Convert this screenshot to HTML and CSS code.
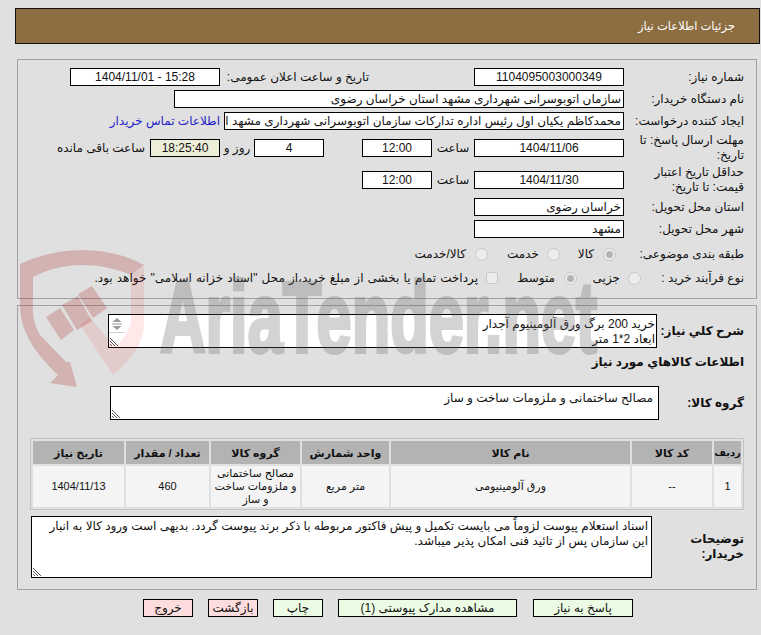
FILE: index.html
```html
<!DOCTYPE html>
<html lang="fa" dir="rtl">
<head>
<meta charset="utf-8">
<title>جزئیات اطلاعات نیاز</title>
<link rel="stylesheet" href="styles.css">
</head>
<body>
<div class="page">
  <header class="title"><span>جزئیات اطلاعات نیاز</span></header>

  <section class="panel top">
    <div class="row r1">
      <label class="lab">شماره نیاز:</label>
      <div class="box w150 c">1104095003000349</div>
      <label class="lab2">تاریخ و ساعت اعلان عمومی:</label>
      <div class="box w150 c">15:28 - 1404/11/01</div>
    </div>
    <div class="row r1">
      <label class="lab">نام دستگاه خریدار:</label>
      <div class="box w450">سازمان اتوبوسرانی شهرداری مشهد استان خراسان رضوی</div>
    </div>
    <div class="row r1">
      <label class="lab">ایجاد کننده درخواست:</label>
      <div class="box w400 clip">محمدکاظم یکیان اول رئیس اداره تدارکات سازمان اتوبوسرانی شهرداری مشهد استان خراسان</div>
      <a class="link">اطلاعات تماس خریدار</a>
    </div>
    <div class="row r2">
      <label class="lab">مهلت ارسال پاسخ: تا تاریخ:</label>
      <div class="box w150 c">1404/11/06</div>
      <span class="unit">ساعت</span>
      <div class="box w70 c">12:00</div>
      <div class="box w70 c days">4</div>
      <span class="roz">روز و</span>
      <div class="box w70 c timer">18:25:40</div>
      <span class="rem">ساعت باقی مانده</span>
    </div>
    <div class="row r2">
      <label class="lab">حداقل تاریخ اعتبار قیمت: تا تاریخ:</label>
      <div class="box w150 c">1404/11/30</div>
      <span class="unit">ساعت</span>
      <div class="box w70 c">12:00</div>
    </div>
    <div class="row r1">
      <label class="lab">استان محل تحویل:</label>
      <div class="box w150">خراسان رضوی</div>
    </div>
    <div class="row r1">
      <label class="lab">شهر محل تحویل:</label>
      <div class="box w150">مشهد</div>
    </div>
    <div class="row r4">
      <label class="lab">طبقه بندی موضوعی:</label>
      <div class="opts cat">
        <span class="radio on"></span><span class="opt o1">کالا</span>
        <span class="radio"></span><span class="opt o2">خدمت</span>
        <span class="radio"></span><span class="opt o0">کالا/خدمت</span>
      </div>
    </div>
    <div class="row r5">
      <label class="lab narrow">نوع فرآیند خرید :</label>
      <div class="opts">
        <span class="radio"></span><span class="opt o3">جزیی</span>
        <span class="radio on"></span><span class="opt o4">متوسط</span>
        <span class="check"></span><span class="opt o5">پرداخت تمام یا بخشی از مبلغ خرید،از محل "اسناد خزانه اسلامی" خواهد بود.</span>
      </div>
    </div>
  </section>

  <section class="panel bottom">
    <div class="row s1">
      <label class="lab b">شرح کلي نياز:</label>
      <div class="area need">
        <div class="need-text">خرید 200 برگ ورق آلومینیوم آجدار<br>ابعاد 2*1 متر</div>
        <div class="spin">
          <svg class="spin-ic" width="12" height="16" viewBox="0 0 12 16"><path d="M6 1 10.500 5H1.500ZM1 6.500H11V7.500H1ZM1.500 9H10.500L6 13Z" fill="#9a9a9a"/></svg>
          <svg class="grip" width="9" height="9" viewBox="0 0 9 9"><path d="M0 1 8 9M0 4 5 9M0 7 2 9" stroke="#555" fill="none"/></svg>
        </div>
      </div>
    </div>
    <h3 class="goods">اطلاعات کالاهاي مورد نياز</h3>
    <div class="row s2">
      <label class="lab b">گروه کالا:</label>
      <div class="area grp">
        <div>مصالح ساختمانی و ملزومات ساخت و ساز</div>
        <svg class="grip" width="9" height="9" viewBox="0 0 9 9"><path d="M0 1 8 9M0 4 5 9M0 7 2 9" stroke="#555" fill="none"/></svg>
      </div>
    </div>
    <table class="items">
      <thead>
        <tr><th class="t1">ردیف</th><th class="t2">کد کالا</th><th class="t3">نام کالا</th><th class="t4">واحد شمارش</th><th class="t5">گروه کالا</th><th class="t6">تعداد / مقدار</th><th class="t7">تاریخ نیاز</th></tr>
      </thead>
      <tbody>
        <tr><td>1</td><td>--</td><td>ورق آلومینیومی</td><td>متر مربع</td><td>مصالح ساختمانی و ملزومات ساخت و ساز</td><td>460</td><td>1404/11/13</td></tr>
      </tbody>
    </table>
    <div class="row s3">
      <label class="lab b">توضیحات خریدار:</label>
      <div class="area notes">
        <div>اسناد استعلام پیوست لزوماً می بایست تکمیل و پیش فاکتور مربوطه با ذکر برند پیوست گردد. بدیهی است ورود کالا به انبار این سازمان پس از تائید فنی امکان پذیر میباشد.</div>
        <svg class="grip" width="9" height="9" viewBox="0 0 9 9"><path d="M0 1 8 9M0 4 5 9M0 7 2 9" stroke="#555" fill="none"/></svg>
      </div>
    </div>
  </section>

  <nav class="actions">
    <button class="btn green bw1">پاسخ به نیاز</button>
    <button class="btn green bw2">مشاهده مدارک پیوستی (1)</button>
    <button class="btn green bw3">چاپ</button>
    <button class="btn red bw3">بازگشت</button>
    <button class="btn red bw3">خروج</button>
  </nav>
</div>

<div class="mark" aria-hidden="true">
  <svg width="761" height="635" viewBox="0 0 761 635">
    <path class="m-dark" d="M20 264C40 255 60 250 82 250C105 250 125 255 144 265L131 275C115 268 98 265 82 265C65 265 48 269 33 277V310C33 320 36 328 40 335L66 362 70 362 77 387 50 383 58 375C40 358 20 335 20 305Z"/>
    <path class="m-light" d="M144 265V325C144 345 128 362 113 375L80 325 90 318 115 347C125 337 131 328 131 320V275Z"/>
    <path class="m-dark" d="M46 317 60 308 74 330 61 340ZM62 305 78 296 92 321 77 330ZM78 294 92 286 107 308 93 318Z"/>
    <text class="m-text" x="160" y="352" textLength="437" lengthAdjust="spacingAndGlyphs">AriaTender.net</text>
  </svg>
</div>
</body>
</html>
```
FILE: styles.css
```css
* { box-sizing: border-box; }
html, body { margin: 0; height: 100%; }
body {
  background: #e0e0e0;
  color: #111;
  font: 12px/16px "Liberation Sans", "DejaVu Sans", sans-serif;
  overflow: hidden;
  position: relative;
}
.page { width: 761px; padding-top: 8px; }
.title {
  height: 36px; width: 745px;
  margin-right: 1px;
  background: #8d6e42;
  border: 1px solid #111;
  color: #fff;
  font-size: 11.5px;
  display: flex; align-items: center;
  padding-right: 24px;
}
.panel { border: 1px solid #a0a0a0; width: 740px; margin-right: 4px; }
.top { height: 240px; margin-top: 15px; padding-top: 6px; }
.bottom { height: 285px; margin-top: 6px; padding-top: 8px; }
.row { display: flex; align-items: center; }
.lab { width: 132px; padding-right: 12px; flex: none; line-height: 15px; }
.narrow { width: 115px; }
.r1 { height: 22px; }
.r2 { height: 32px; }
.r4 { height: 26px; margin-top: 1px; }
.r5 { height: 22px; }
.box {
  height: 18px; border: 1px solid #000; background: #fff;
  line-height: 16px; padding: 0 2px; white-space: nowrap; overflow: hidden; flex: none;
}
.c { text-align: center; }
.w150 { width: 150px; }
.w450 { width: 450px; }
.w400 { width: 400px; }
.w70 { width: 70px; }
.lab2 { width: 254px; padding-right: 105px; flex: none; white-space: nowrap; }
.link { color: #2222cc; margin-right: 4px; white-space: nowrap; }
.unit { width: 42px; text-align: center; flex: none; }
.days { margin-right: 38px; }
.roz { width: 34px; text-align: center; flex: none; }
.timer { background: #eeeed8; }
.rem { margin-right: 5px; white-space: nowrap; }
.opts { display: flex; align-items: center; white-space: nowrap; }
.cat { padding-right: 8px; }
.radio {
  width: 13px; height: 13px; border-radius: 50%; flex: none;
  background: #ececec; border: 1px solid #c8c8c8;
}
.radio.on::after {
  content: ""; display: block; width: 7px; height: 7px; border-radius: 50%;
  background: #b4b4b4; margin: 2px;
}
.check {
  width: 12px; height: 12px; flex: none; background: #ececec;
  border: 1px solid #c8c8c8; border-radius: 2px;
}
.opt { flex: none; }
.o1 { width: 43px; padding-right: 9px; }
.o2 { width: 59px; padding-right: 8px; }
.o0 { padding-right: 9px; }
.o3 { width: 51px; padding-right: 8px; }
.o4 { width: 66px; padding-right: 9px; }
.o5 { padding-right: 8px; word-spacing: .8px; }
.b { font-weight: bold; }
.s1 { height: 34px; }
.s1 .lab { width: 99px; }
.area { border: 1px solid #000; background: #fff; flex: none; position: relative; }
.need { width: 549px; height: 34px; display: flex; justify-content: space-between; }
.need-text { padding: 2px 1px 0 0; line-height: 15px; }
.spin { width: 16px; height: 18px; position: static; border-bottom: 1px solid #d0d0d0; }
.spin-ic { position: absolute; left: 2px; top: 2px; }
.grip { position: absolute; left: 1px; bottom: 1px; }
.goods { margin: 5px 12px 0 0; font-size: 12px; line-height: 18px; height: 33px; }
.s2 { height: 34px; }
.s2 .lab { width: 97px; }
.grp { width: 549px; height: 34px; padding: 3px 5px; }
.items {
  width: 713px; margin: 18px 12px 0 0;
  border-collapse: separate; border-spacing: 2px;
  border: 1px solid #c4c4c4; table-layout: fixed; font-size: 11px;
}
.items th { background: #b3b3b3; height: 23px; padding: 0; line-height: 14px; }
.items .t1 { font-size: 10px; }
.items td { background: #f4f4f4; height: 41px; padding: 0 2px; text-align: center; line-height: 13px; }
.t1 { width: 27px; } .t2 { width: 80px; } .t3 { width: 239px; }
.t4 { width: 87px; } .t5 { width: 89px; } .t6 { width: 83px; } .t7 { width: 91px; }
.s3 { height: 62px; margin-top: 6px; }
.s3 .lab { width: 104px; padding-left: 30px; }
.notes { width: 621px; height: 62px; padding: 2px 3px 0 12px; line-height: 15px; }
.actions { display: flex; gap: 15px; margin: 9px 128px 0 0; }
.btn {
  height: 18px; padding: 0; border: 1px solid #000; font: inherit; color: #111; line-height: 14px; flex: none;
}
.green { background: #ecfce4; }
.red { background: #fcdcdc; }
.bw1 { width: 100px; margin-left: 1px; }
.bw2 { width: 179px; }
.bw3 { width: 50px; }
.mark { position: absolute; left: 0; top: 0; width: 761px; height: 635px; pointer-events: none; }
.mark svg { display: block; }
.m-dark { fill: rgba(170, 40, 40, .25); }
.m-light { fill: rgba(255, 0, 0, .09); }
.m-text {
  font: bold 100px "Liberation Sans", sans-serif;
  fill: #666; stroke: #666; stroke-width: 4px; opacity: .28;
  direction: ltr;
}
```
